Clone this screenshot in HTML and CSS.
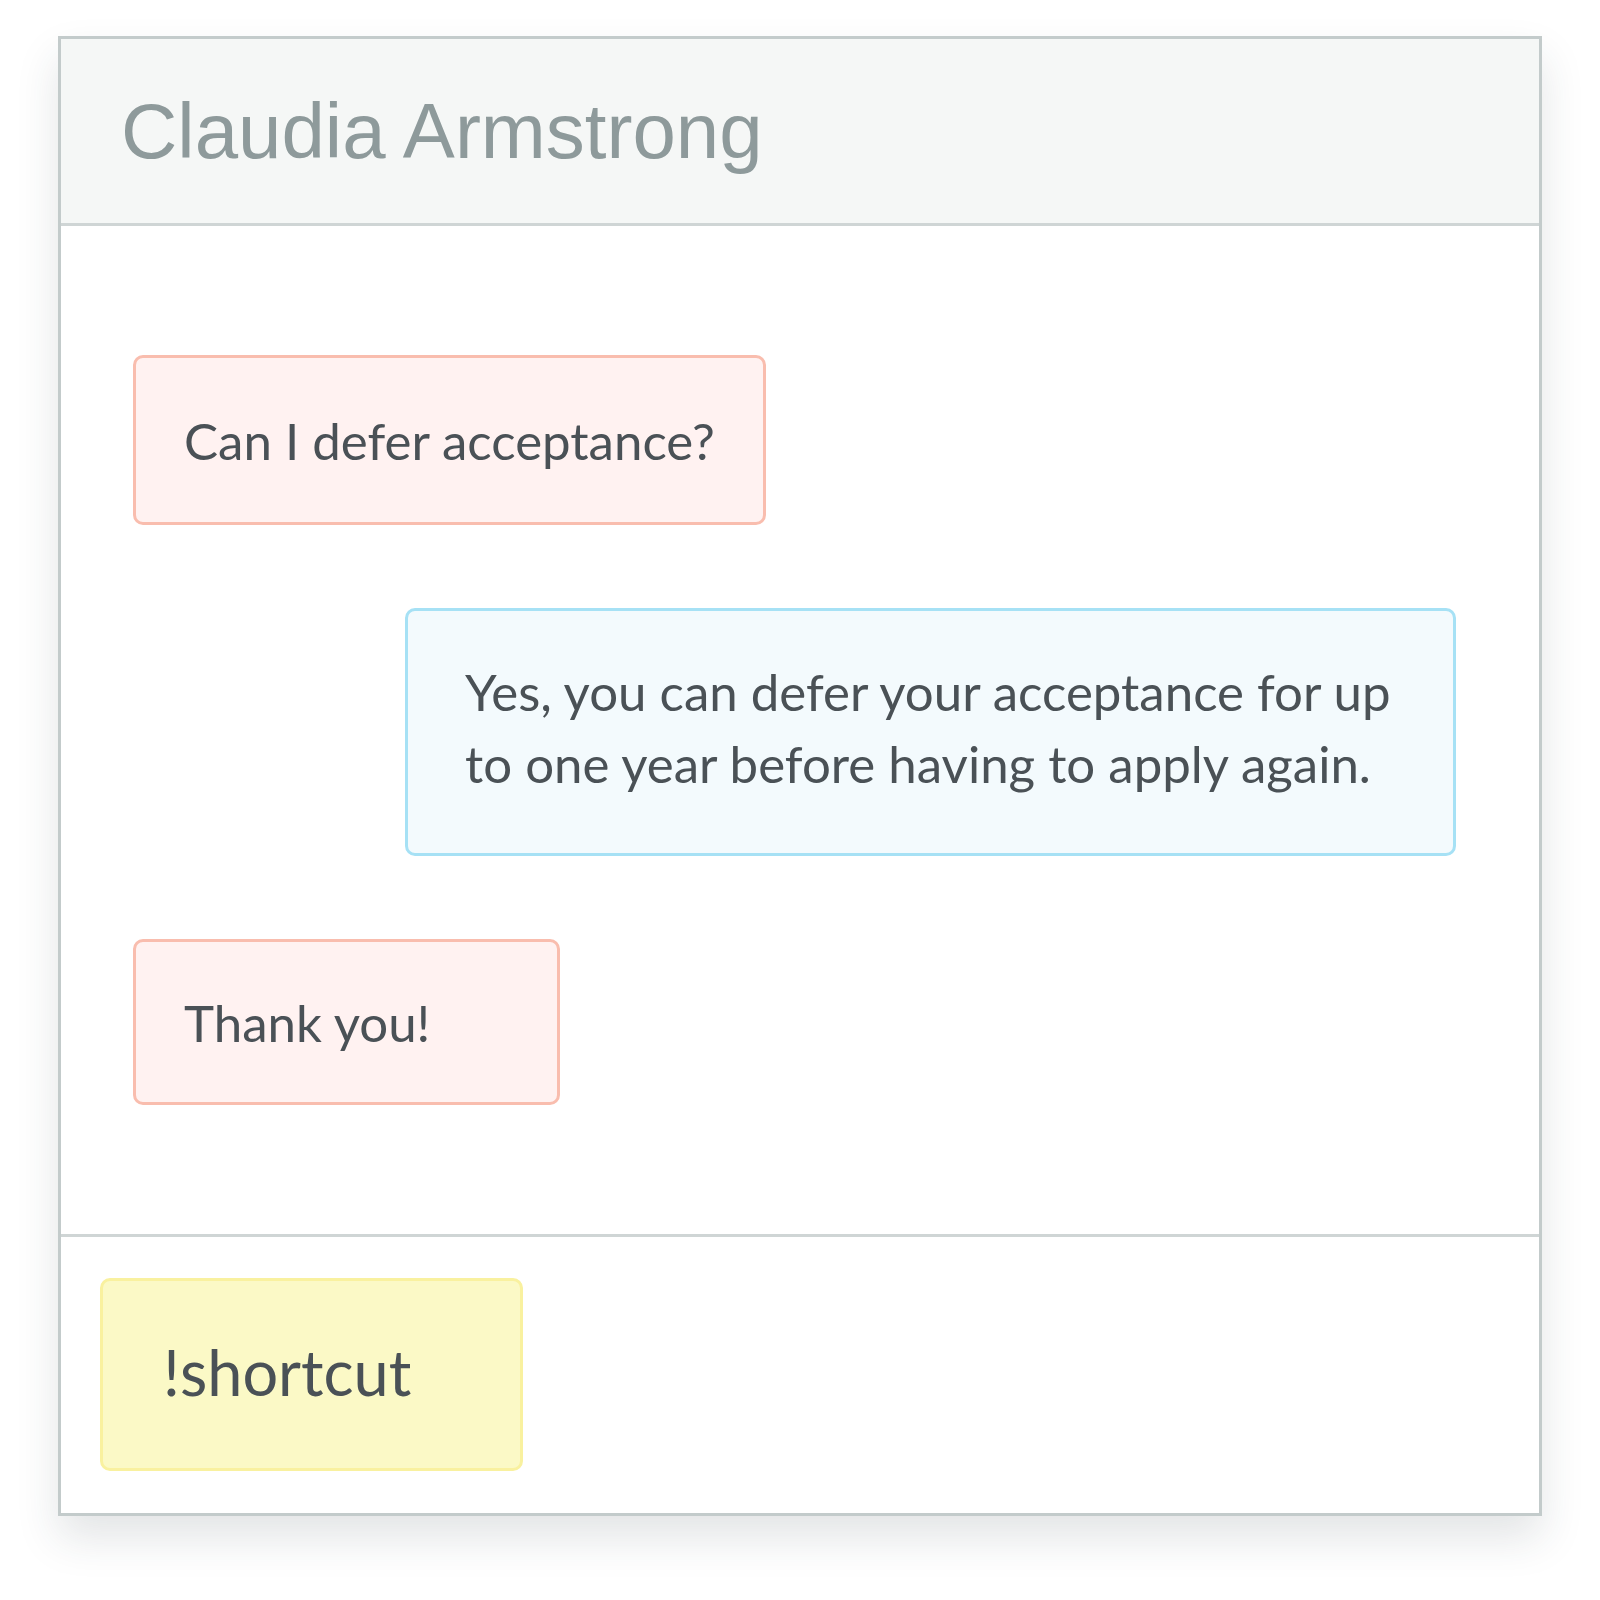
FILE: index.html
```html
<!DOCTYPE html>
<html lang="en">
<head>
<meta charset="utf-8">
<title>Chat</title>
<link rel="stylesheet" href="styles.css">
</head>
<body>
<div class="card">
  <div class="card-header">Claudia Armstrong</div>
  <div class="messages">
    <div class="bubble bubble-in bubble-first">Can I defer acceptance?</div>
    <div class="bubble bubble-out">Yes, you can defer your acceptance for up to one year before having to apply again.</div>
    <div class="bubble bubble-in bubble-short">Thank you!</div>
  </div>
  <div class="composer">
    <div class="shortcut">!shortcut</div>
  </div>
</div>
</body>
</html>
```
FILE: styles.css
```css
html, body {
  margin: 0;
  padding: 0;
  background: #ffffff;
}
body {
  width: 1600px;
  height: 1600px;
  font-family: "Lato", "Open Sans", sans-serif;
}
.card {
  margin: 36px 0 0 58px;
  width: 1484px;
  box-sizing: border-box;
  border: 3px solid #c3cbcb;
  background: #ffffff;
  box-shadow: 0 22px 40px rgba(40, 55, 60, 0.13);
}
.card-header {
  height: 184px;
  display: flex;
  align-items: center;
  padding-left: 60px;
  background: #f5f7f6;
  border-bottom: 3px solid #cfd5d5;
  font-family: "Liberation Sans", Arial, sans-serif;
  font-size: 78px;
  color: #8e9a9b;
}
.messages {
  display: flex;
  flex-direction: column;
  align-items: flex-start;
  gap: 83px;
  padding: 129px 83px 129px 72px;
  border-bottom: 3px solid #cfd5d5;
}
.bubble {
  box-sizing: border-box;
  border: 3px solid;
  border-radius: 10px;
  font-size: 51px;
  line-height: 72px;
  color: #4a5156;
}
.bubble-in {
  background: #fff2f1;
  border-color: #f9bdae;
  padding: 47px 48px 45px 48px;
}
.bubble-short {
  min-width: 427px;
  padding-top: 45px;
  padding-bottom: 43px;
}
.bubble-out {
  align-self: flex-end;
  width: 1051px;
  background: #f3fafd;
  border-color: #a6e1f5;
  padding: 45px 57px 53px 57px;
}
.composer {
  padding: 41px 40px 42px 39px;
}
.shortcut {
  box-sizing: border-box;
  width: 423px;
  height: 193px;
  display: flex;
  align-items: center;
  padding-left: 60px;
  padding-bottom: 6px;
  background: #fbf9c6;
  border: 3px solid #f9f19f;
  border-radius: 10px;
  font-size: 63px;
  color: #4a5156;
}
```
